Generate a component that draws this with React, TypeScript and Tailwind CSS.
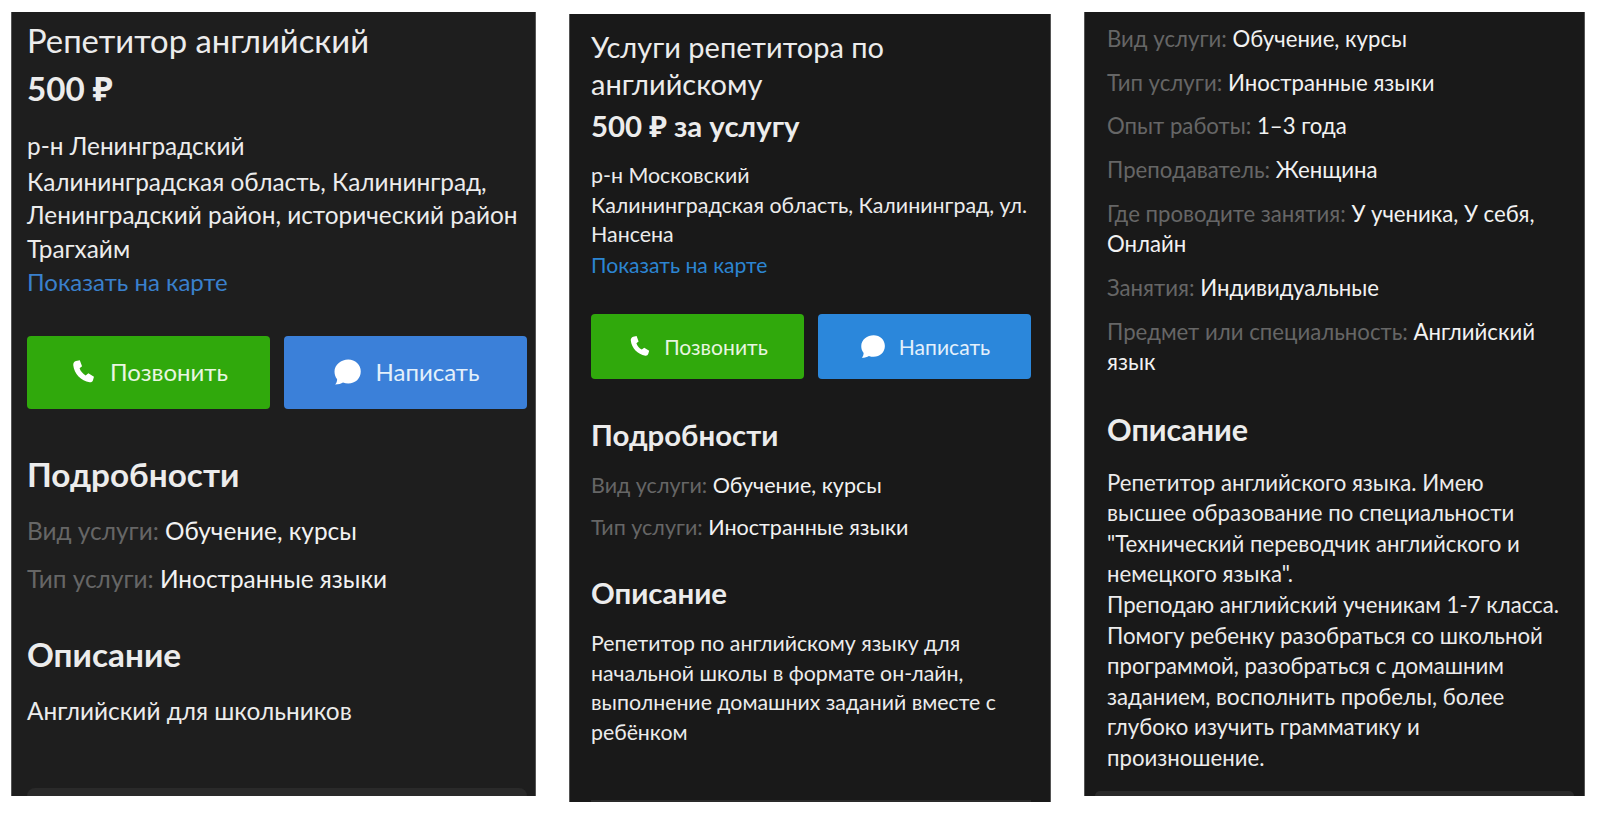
interface RowProps {
  label: string;
  value: string;
  className?: string;
}

function Row({ label, value, className }: RowProps) {
  return (
    <p className={className}>
      <span className="text-[#666666]">{label}: </span>
      <span className="text-[#f2f2f2]">{value}</span>
    </p>
  );
}

function PhoneIcon({ className }: { className: string }) {
  return (
    <svg viewBox="0 0 24 24" className={className} fill="currentColor">
      <path d="M6.200 1.800 9.600 1l2 5.400-2.200 1.900c.9 2.600 2.900 5 5.400 6.300l2.400-1.900 5 3-.9 3.100c-.4 1.300-1.600 2.100-2.900 1.900C10.700 19.500 4.500 13 3.800 5.500c-.2-1.700.8-3.200 2.400-3.700Z" />
    </svg>
  );
}

function ChatIcon({ className }: { className: string }) {
  return (
    <svg viewBox="0 0 24 24" className={className} fill="currentColor">
      <path d="M13 2c5.600 0 10 4 10 9.600s-4.400 9.600-10 9.600c-1.500 0-2.900-.3-4.200-.8-1.500 1-3.500 1.600-6.300 1.600 1-1.200 1.600-2.600 1.600-4.300C2.600 16 2 13.900 2 11.600 2 6 7.400 2 13 2Z" />
    </svg>
  );
}

const font = { fontFamily: '"Lato", "Noto Sans", sans-serif' };

export default function App() {
  return (
    <div className="flex items-start w-[1600px] h-[816px] bg-white overflow-hidden" style={font}>
      {/* first listing */}
      <section className="flex flex-col ml-[11px] mt-3 w-[525px] h-[784px] bg-[#1e1e1e] border-x border-[#555555] pl-[15px] pr-2 text-[#ececec] overflow-hidden">
        <h1 className="mt-[10px] text-[32.8px] leading-[38px]">Репетитор английский</h1>
        <p className="mt-[9px] text-[33.2px] leading-[38px] font-bold">500 ₽</p>
        <div className="mt-[22px] text-[24.4px] leading-[33.5px]">
          <p className="mb-[2px]">р-н Ленинградский</p>
          <p>Калининградская область, Калининград, Ленинградский район, исторический район Трагхайм</p>
          <a className="block text-[24px] text-[#3a80cc]">Показать на карте</a>
        </div>
        <div className="mt-[37px] grid grid-cols-2 gap-[14px]">
          <button className="flex items-center justify-center gap-[14px] h-[73px] rounded bg-[#30a90c] text-[24px] text-[#e8f6e0]">
            <PhoneIcon className="w-[27px] h-[27px] text-white" />
            Позвонить
          </button>
          <button className="flex items-center justify-center gap-[14px] h-[73px] rounded bg-[#3b80d9] text-[24px] text-[#e3f0fb]">
            <ChatIcon className="w-[30px] h-[30px] text-white" />
            Написать
          </button>
        </div>
        <h2 className="mt-[45px] text-[33.3px] leading-[40px] font-bold">Подробности</h2>
        <Row className="mt-[21px] text-[24.4px] leading-[32px]" label="Вид услуги" value="Обучение, курсы" />
        <Row className="mt-4 text-[24.4px] leading-[32px]" label="Тип услуги" value="Иностранные языки" />
        <h2 className="mt-[39px] text-[33.3px] leading-[40px] font-bold">Описание</h2>
        <p className="mt-[21px] text-[24.4px] leading-[32px]">Английский для школьников</p>
        <div className="mt-auto h-2 rounded-t-lg bg-[#2a2a2a]" />
      </section>

      {/* second listing */}
      <section className="flex flex-col ml-[33px] mt-[14px] w-[482px] h-[788px] bg-[#191919] border-x border-[#555555] pl-[21px] pr-[19px] text-[#ececec] overflow-hidden">
        <h1 className="mt-[14px] text-[29px] leading-[37px]">Услуги репетитора по английскому</h1>
        <p className="mt-[5px] text-[29.4px] leading-[37px] font-bold">500 ₽ за услугу</p>
        <div className="mt-[17px] text-[21.4px] leading-[29.5px]">
          <p>р-н Московский</p>
          <p>Калининградская область, Калининград, ул. Нансена</p>
          <a className="block text-[21.1px] text-[#2c85d2]">Показать на карте</a>
        </div>
        <div className="mt-[35px] grid grid-cols-2 gap-[14px]">
          <button className="flex items-center justify-center gap-[13px] h-[65px] rounded bg-[#30a90c] text-[21.1px] text-[#e8f6e0]">
            <PhoneIcon className="w-[24px] h-[24px] text-white" />
            Позвонить
          </button>
          <button className="flex items-center justify-center gap-[13px] h-[65px] rounded bg-[#2b87db] text-[21.1px] text-[#e3f0fb]">
            <ChatIcon className="w-[27px] h-[27px] text-white" />
            Написать
          </button>
        </div>
        <h2 className="mt-[38px] text-[29.4px] leading-[36px] font-bold">Подробности</h2>
        <Row className="mt-[17px] text-[21.5px] leading-[30px]" label="Вид услуги" value="Обучение, курсы" />
        <Row className="mt-[12px] text-[21.5px] leading-[30px]" label="Тип услуги" value="Иностранные языки" />
        <h2 className="mt-[33px] text-[29.4px] leading-[36px] font-bold">Описание</h2>
        <p className="mt-[18px] text-[21.3px] leading-[29.6px]">
          Репетитор по английскому языку для начальной школы в формате он-лайн, выполнение домашних заданий вместе с ребёнком
        </p>
        <div className="mt-auto h-[2px] bg-[#2a2a2a]" />
      </section>

      {/* third listing */}
      <section className="flex flex-col ml-[33px] mt-3 w-[501px] h-[784px] bg-[#191919] border-x border-[#555555] text-[#ececec] overflow-hidden">
        <div className="pl-[22px] pr-[20px]">
          <div className="mt-3 flex flex-col gap-[13.2px] text-[22.2px] leading-[30.5px]">
            <Row label="Вид услуги" value="Обучение, курсы" />
            <Row label="Тип услуги" value="Иностранные языки" />
            <Row label="Опыт работы" value="1–3 года" />
            <Row label="Преподаватель" value="Женщина" />
            <Row label="Где проводите занятия" value="У ученика, У себя, Онлайн" />
            <Row label="Занятия" value="Индивидуальные" />
            <Row label="Предмет или специальность" value="Английский язык" />
          </div>
          <h2 className="mt-[33px] text-[30.5px] leading-[36px] font-bold">Описание</h2>
          <p className="mt-[21px] text-[22.2px] leading-[30.6px]">
            Репетитор английского языка. Имею высшее образование по специальности "Технический переводчик английского и немецкого языка".
            <br />
            Преподаю английский ученикам 1-7 класса. Помогу ребенку разобраться со школьной программой, разобраться с домашним заданием, восполнить пробелы, более глубоко изучить грамматику и произношение.
          </p>
        </div>
        <div className="mt-auto mx-[10px] h-[5px] rounded-t-xl bg-[#2a2a2a]" />
      </section>
    </div>
  );
}
